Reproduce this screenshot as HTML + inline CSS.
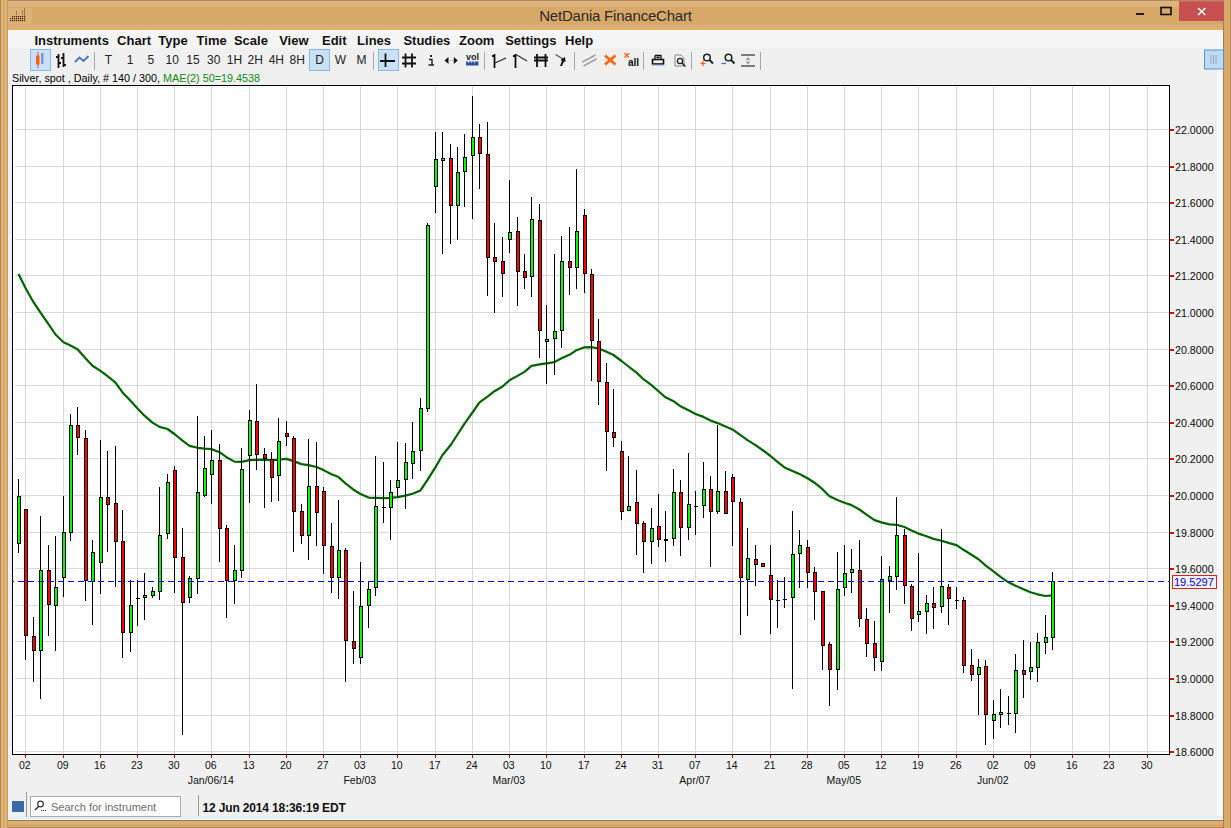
<!DOCTYPE html>
<html><head><meta charset="utf-8"><style>
*{margin:0;padding:0;box-sizing:border-box}
html,body{width:1231px;height:828px;overflow:hidden;background:#d8a868;font-family:"Liberation Sans", sans-serif}
.abs{position:absolute}
#titlebar{position:absolute;left:0;top:0;width:1231px;height:30px;background:linear-gradient(#b08a5a 0px,#b08a5a 1px,#dcb47e 1px,#dcb47e 7px,#d8a868 7px,#d8a868 24px,#e6a866 24px,#e6a866 25px,#d2b07a 25px,#d2b07a 28px,#e8b05e 28px,#e8b05e 30px)}
#title{position:absolute;left:0;width:1231px;top:6.5px;text-align:center;font-size:15px;color:#2a2a2a;letter-spacing:-0.2px}
#content{position:absolute;left:8px;top:30px;width:1215px;height:790px;background:#f0f0f0}
#menubar{position:absolute;left:8px;top:30px;width:1209px;height:18px;background:#f5f5f5}
.mi{position:absolute;top:33px;font-size:13px;font-weight:bold;color:#111;white-space:nowrap}
.tt{position:absolute;top:53px;width:30px;text-align:center;font-size:12px;color:#222}
.sep{position:absolute;top:52px;width:1px;height:18px;background:#a8a8a8}
.sel{position:absolute;top:49px;height:22px;background:#c9e0f7;border:1px solid #86b8ea}
#info{position:absolute;left:12px;top:72px;font-size:10.8px;color:#000;white-space:nowrap}
.yl{position:absolute;left:1175px;font-size:10.7px;color:#0a0a0a;white-space:nowrap;line-height:14px;transform:scaleY(1.08);transform-origin:0 50%}
.xl{position:absolute;top:758px;width:40px;text-align:center;font-size:10.5px;color:#111;line-height:14px;transform:scaleY(1.1)}
.ml{position:absolute;top:773px;width:80px;text-align:center;font-size:10.5px;color:#111;line-height:14px}
</style></head><body>
<div id="titlebar"></div>
<div class="abs" style="left:0;top:0;width:8px;height:828px;background:linear-gradient(90deg,#b08550 0,#b08550 1px,#dcb47c 1px,#dcb47c 3px,#d6aa62 3px,#d6aa62 5px,#dcb47c 5px,#dcb47c 7px,#c29a68 7px,#c29a68 8px)"></div>
<div class="abs" style="left:1223px;top:0;width:8px;height:828px;background:linear-gradient(90deg,#a87c4c 0,#a87c4c 1px,#d8a868 1px,#d8a868 6px,#dcb47c 6px,#dcb47c 7px,#b08550 7px)"></div>
<div class="abs" style="left:8px;top:820px;width:1215px;height:8px;background:linear-gradient(#a07848 0,#a07848 1px,#e8ac5c 1px,#e8ac5c 2.5px,#d4b47c 2.5px,#d4b47c 4px,#d8a868 4px,#d8a868 7px,#b08a58 7px)"></div>
<div id="title">NetDania FinanceChart</div>
<div id="content"></div>
<div class="abs" style="left:1217px;top:30px;width:6px;height:790px;background:#f4f7fb"></div>
<div class="abs" style="left:8px;top:816px;width:1215px;height:4px;background:linear-gradient(#e3eefa 0,#e3eefa 3px,#fff 3px)"></div>
<div id="menubar"></div>
<div class="mi" style="left:34.5px">Instruments</div>
<div class="mi" style="left:117.1px">Chart&nbsp;&nbsp;Type</div>
<div class="mi" style="left:196.6px">Time&nbsp;&nbsp;Scale</div>
<div class="mi" style="left:279.2px">View</div>
<div class="mi" style="left:322px">Edit</div>
<div class="mi" style="left:357.1px">Lines</div>
<div class="mi" style="left:403.4px">Studies</div>
<div class="mi" style="left:459px">Zoom</div>
<div class="mi" style="left:505.2px">Settings</div>
<div class="mi" style="left:565px">Help</div>
<div class="sel" style="left:30px;width:21px"></div>
<div class="sel" style="left:309px;width:21px"></div>
<div class="sel" style="left:378px;width:21px"></div>
<div class="tt" style="left:93.5px">T</div>
<div class="tt" style="left:115.1px">1</div>
<div class="tt" style="left:135.9px">5</div>
<div class="tt" style="left:157.2px">10</div>
<div class="tt" style="left:177.9px">15</div>
<div class="tt" style="left:198.7px">30</div>
<div class="tt" style="left:219.4px">1H</div>
<div class="tt" style="left:240.2px">2H</div>
<div class="tt" style="left:261.3px">4H</div>
<div class="tt" style="left:282.2px">8H</div>
<div class="tt" style="left:304.5px">D</div>
<div class="tt" style="left:325.3px">W</div>
<div class="tt" style="left:346.4px">M</div>
<div class="sep" style="left:94px"></div>
<div class="sep" style="left:373px"></div>
<div class="sep" style="left:484px"></div>
<div class="sep" style="left:574px"></div>
<div class="sep" style="left:643px"></div>
<div class="sep" style="left:691px"></div>
<div class="sep" style="left:760px"></div>
<div id="info">Silver, spot , Daily, # 140 / 300, <span style="color:#128a12">MAE(2) 50=19.4538</span></div>
<svg class="abs" style="left:0;top:0" width="1231" height="828" viewBox="0 0 1231 828" shape-rendering="crispEdges">
<rect x="12" y="85" width="1157" height="669" fill="#ffffff"/>
<line x1="15" y1="129.5" x2="1169" y2="129.5" stroke="#d9d9d9" stroke-width="1"/>
<line x1="15" y1="166.5" x2="1169" y2="166.5" stroke="#d9d9d9" stroke-width="1"/>
<line x1="15" y1="202.5" x2="1169" y2="202.5" stroke="#d9d9d9" stroke-width="1"/>
<line x1="15" y1="239.5" x2="1169" y2="239.5" stroke="#d9d9d9" stroke-width="1"/>
<line x1="15" y1="275.5" x2="1169" y2="275.5" stroke="#d9d9d9" stroke-width="1"/>
<line x1="15" y1="312.5" x2="1169" y2="312.5" stroke="#d9d9d9" stroke-width="1"/>
<line x1="15" y1="349.5" x2="1169" y2="349.5" stroke="#d9d9d9" stroke-width="1"/>
<line x1="15" y1="385.5" x2="1169" y2="385.5" stroke="#d9d9d9" stroke-width="1"/>
<line x1="15" y1="422.5" x2="1169" y2="422.5" stroke="#d9d9d9" stroke-width="1"/>
<line x1="15" y1="458.5" x2="1169" y2="458.5" stroke="#d9d9d9" stroke-width="1"/>
<line x1="15" y1="495.5" x2="1169" y2="495.5" stroke="#d9d9d9" stroke-width="1"/>
<line x1="15" y1="532.5" x2="1169" y2="532.5" stroke="#d9d9d9" stroke-width="1"/>
<line x1="15" y1="568.5" x2="1169" y2="568.5" stroke="#d9d9d9" stroke-width="1"/>
<line x1="15" y1="605.5" x2="1169" y2="605.5" stroke="#d9d9d9" stroke-width="1"/>
<line x1="15" y1="641.5" x2="1169" y2="641.5" stroke="#d9d9d9" stroke-width="1"/>
<line x1="15" y1="678.5" x2="1169" y2="678.5" stroke="#d9d9d9" stroke-width="1"/>
<line x1="15" y1="715.5" x2="1169" y2="715.5" stroke="#d9d9d9" stroke-width="1"/>
<line x1="15" y1="751.5" x2="1169" y2="751.5" stroke="#d9d9d9" stroke-width="1"/>
<line x1="25.5" y1="85" x2="25.5" y2="754" stroke="#d9d9d9" stroke-width="1"/>
<line x1="63.5" y1="85" x2="63.5" y2="754" stroke="#d9d9d9" stroke-width="1"/>
<line x1="100.5" y1="85" x2="100.5" y2="754" stroke="#d9d9d9" stroke-width="1"/>
<line x1="137.5" y1="85" x2="137.5" y2="754" stroke="#d9d9d9" stroke-width="1"/>
<line x1="174.5" y1="85" x2="174.5" y2="754" stroke="#d9d9d9" stroke-width="1"/>
<line x1="211.5" y1="85" x2="211.5" y2="754" stroke="#d9d9d9" stroke-width="1"/>
<line x1="249.5" y1="85" x2="249.5" y2="754" stroke="#d9d9d9" stroke-width="1"/>
<line x1="286.5" y1="85" x2="286.5" y2="754" stroke="#d9d9d9" stroke-width="1"/>
<line x1="323.5" y1="85" x2="323.5" y2="754" stroke="#d9d9d9" stroke-width="1"/>
<line x1="360.5" y1="85" x2="360.5" y2="754" stroke="#d9d9d9" stroke-width="1"/>
<line x1="397.5" y1="85" x2="397.5" y2="754" stroke="#d9d9d9" stroke-width="1"/>
<line x1="435.5" y1="85" x2="435.5" y2="754" stroke="#d9d9d9" stroke-width="1"/>
<line x1="472.5" y1="85" x2="472.5" y2="754" stroke="#d9d9d9" stroke-width="1"/>
<line x1="509.5" y1="85" x2="509.5" y2="754" stroke="#d9d9d9" stroke-width="1"/>
<line x1="546.5" y1="85" x2="546.5" y2="754" stroke="#d9d9d9" stroke-width="1"/>
<line x1="584.5" y1="85" x2="584.5" y2="754" stroke="#d9d9d9" stroke-width="1"/>
<line x1="621.5" y1="85" x2="621.5" y2="754" stroke="#d9d9d9" stroke-width="1"/>
<line x1="658.5" y1="85" x2="658.5" y2="754" stroke="#d9d9d9" stroke-width="1"/>
<line x1="695.5" y1="85" x2="695.5" y2="754" stroke="#d9d9d9" stroke-width="1"/>
<line x1="732.5" y1="85" x2="732.5" y2="754" stroke="#d9d9d9" stroke-width="1"/>
<line x1="770.5" y1="85" x2="770.5" y2="754" stroke="#d9d9d9" stroke-width="1"/>
<line x1="807.5" y1="85" x2="807.5" y2="754" stroke="#d9d9d9" stroke-width="1"/>
<line x1="844.5" y1="85" x2="844.5" y2="754" stroke="#d9d9d9" stroke-width="1"/>
<line x1="881.5" y1="85" x2="881.5" y2="754" stroke="#d9d9d9" stroke-width="1"/>
<line x1="918.5" y1="85" x2="918.5" y2="754" stroke="#d9d9d9" stroke-width="1"/>
<line x1="956.5" y1="85" x2="956.5" y2="754" stroke="#d9d9d9" stroke-width="1"/>
<line x1="993.5" y1="85" x2="993.5" y2="754" stroke="#d9d9d9" stroke-width="1"/>
<line x1="1030.5" y1="85" x2="1030.5" y2="754" stroke="#d9d9d9" stroke-width="1"/>
<line x1="1072.5" y1="85" x2="1072.5" y2="754" stroke="#d9d9d9" stroke-width="1"/>
<line x1="1109.5" y1="85" x2="1109.5" y2="754" stroke="#d9d9d9" stroke-width="1"/>
<line x1="1147.5" y1="85" x2="1147.5" y2="754" stroke="#d9d9d9" stroke-width="1"/>
<polyline points="18.5,273.9 25.5,288.0 33.5,302.2 40.5,312.7 48.5,324.2 55.5,334.5 63.5,342.3 70.5,345.5 77.5,349.2 85.5,358.3 92.5,365.8 100.5,370.9 107.5,376.1 115.5,382.6 122.5,392.4 130.5,400.7 137.5,408.4 144.5,415.7 152.5,422.6 159.5,426.9 167.5,429.0 174.5,434.0 182.5,440.6 189.5,445.9 197.5,447.8 204.5,448.6 211.5,449.1 219.5,452.2 226.5,457.2 234.5,461.6 241.5,461.9 249.5,460.1 256.5,459.8 264.5,459.7 271.5,460.4 278.5,459.7 286.5,458.9 293.5,461.1 301.5,464.1 308.5,465.1 316.5,467.0 323.5,470.1 331.5,474.3 338.5,477.1 345.5,483.4 353.5,489.7 360.5,494.0 368.5,497.6 375.5,497.8 383.5,498.1 390.5,497.8 397.5,497.1 405.5,495.6 412.5,493.8 420.5,490.4 427.5,479.9 435.5,467.2 442.5,455.0 450.5,445.3 457.5,434.5 464.5,423.7 472.5,412.5 479.5,402.3 487.5,396.6 494.5,391.2 502.5,386.5 509.5,380.3 517.5,375.9 524.5,371.9 531.5,365.8 539.5,364.4 546.5,363.3 554.5,362.1 561.5,358.2 569.5,354.8 576.5,350.2 584.5,347.3 591.5,347.2 598.5,348.5 606.5,351.8 613.5,355.0 621.5,361.0 628.5,366.5 636.5,372.6 643.5,379.2 651.5,385.1 658.5,391.3 665.5,397.3 673.5,401.2 680.5,406.3 688.5,410.3 695.5,414.0 703.5,416.9 710.5,420.5 717.5,423.1 725.5,426.5 732.5,429.4 740.5,435.2 747.5,440.1 755.5,445.1 762.5,450.0 770.5,456.0 777.5,461.8 784.5,467.4 792.5,471.0 799.5,474.1 807.5,478.2 814.5,482.7 822.5,489.2 829.5,496.3 837.5,499.9 844.5,502.7 851.5,505.1 859.5,509.5 866.5,514.6 874.5,520.1 881.5,522.4 889.5,524.4 896.5,524.8 904.5,527.0 911.5,530.6 918.5,533.6 926.5,536.2 933.5,538.9 941.5,540.7 948.5,542.9 956.5,545.1 963.5,549.8 971.5,554.7 978.5,559.2 985.5,565.4 993.5,571.3 1000.5,576.9 1008.5,582.3 1015.5,585.7 1023.5,589.2 1030.5,592.3 1037.5,594.3 1045.5,596.0 1052.5,595.4" fill="none" stroke="#006400" stroke-width="2.2" stroke-linejoin="round" shape-rendering="geometricPrecision"/>
<rect x="18" y="479" width="1" height="74" fill="#000"/>
<rect x="17" y="496" width="4" height="48" fill="#000"/>
<rect x="18" y="497" width="2" height="46" fill="#00ff00"/>
<rect x="25" y="509" width="1" height="151" fill="#000"/>
<rect x="24" y="509" width="4" height="127" fill="#000"/>
<rect x="25" y="510" width="2" height="125" fill="#ff0000"/>
<rect x="33" y="617" width="1" height="65" fill="#000"/>
<rect x="32" y="636" width="4" height="15" fill="#000"/>
<rect x="33" y="637" width="2" height="13" fill="#ff0000"/>
<rect x="40" y="516" width="1" height="183" fill="#000"/>
<rect x="39" y="570" width="4" height="81" fill="#000"/>
<rect x="40" y="571" width="2" height="79" fill="#00ff00"/>
<rect x="48" y="545" width="1" height="91" fill="#000"/>
<rect x="47" y="570" width="4" height="35" fill="#000"/>
<rect x="48" y="571" width="2" height="33" fill="#ff0000"/>
<rect x="55" y="536" width="1" height="115" fill="#000"/>
<rect x="54" y="587" width="4" height="19" fill="#000"/>
<rect x="55" y="588" width="2" height="17" fill="#00ff00"/>
<rect x="63" y="496" width="1" height="101" fill="#000"/>
<rect x="62" y="532" width="4" height="46" fill="#000"/>
<rect x="63" y="533" width="2" height="44" fill="#00ff00"/>
<rect x="70" y="414" width="1" height="127" fill="#000"/>
<rect x="69" y="425" width="4" height="108" fill="#000"/>
<rect x="70" y="426" width="2" height="106" fill="#00ff00"/>
<rect x="77" y="407" width="1" height="48" fill="#000"/>
<rect x="76" y="425" width="4" height="13" fill="#000"/>
<rect x="77" y="426" width="2" height="11" fill="#ff0000"/>
<rect x="85" y="430" width="1" height="171" fill="#000"/>
<rect x="84" y="438" width="4" height="143" fill="#000"/>
<rect x="85" y="439" width="2" height="141" fill="#ff0000"/>
<rect x="92" y="540" width="1" height="85" fill="#000"/>
<rect x="91" y="552" width="4" height="30" fill="#000"/>
<rect x="92" y="553" width="2" height="28" fill="#00ff00"/>
<rect x="100" y="440" width="1" height="154" fill="#000"/>
<rect x="99" y="497" width="4" height="66" fill="#000"/>
<rect x="100" y="498" width="2" height="64" fill="#00ff00"/>
<rect x="107" y="451" width="1" height="101" fill="#000"/>
<rect x="106" y="497" width="4" height="8" fill="#000"/>
<rect x="107" y="498" width="2" height="6" fill="#ff0000"/>
<rect x="115" y="446" width="1" height="141" fill="#000"/>
<rect x="114" y="503" width="4" height="39" fill="#000"/>
<rect x="115" y="504" width="2" height="37" fill="#ff0000"/>
<rect x="122" y="510" width="1" height="148" fill="#000"/>
<rect x="121" y="541" width="4" height="92" fill="#000"/>
<rect x="122" y="542" width="2" height="90" fill="#ff0000"/>
<rect x="130" y="580" width="1" height="72" fill="#000"/>
<rect x="129" y="605" width="4" height="28" fill="#000"/>
<rect x="130" y="606" width="2" height="26" fill="#00ff00"/>
<rect x="137" y="580" width="1" height="46" fill="#000"/>
<rect x="136" y="598" width="4" height="1" fill="#000"/>
<rect x="144" y="573" width="1" height="47" fill="#000"/>
<rect x="143" y="595" width="4" height="3" fill="#000"/>
<rect x="144" y="596" width="2" height="1" fill="#00ff00"/>
<rect x="152" y="587" width="1" height="11" fill="#000"/>
<rect x="151" y="591" width="4" height="5" fill="#000"/>
<rect x="152" y="592" width="2" height="3" fill="#00ff00"/>
<rect x="159" y="487" width="1" height="113" fill="#000"/>
<rect x="158" y="535" width="4" height="57" fill="#000"/>
<rect x="159" y="536" width="2" height="55" fill="#00ff00"/>
<rect x="167" y="474" width="1" height="65" fill="#000"/>
<rect x="166" y="482" width="4" height="52" fill="#000"/>
<rect x="167" y="483" width="2" height="50" fill="#00ff00"/>
<rect x="174" y="466" width="1" height="127" fill="#000"/>
<rect x="173" y="470" width="4" height="88" fill="#000"/>
<rect x="174" y="471" width="2" height="86" fill="#ff0000"/>
<rect x="182" y="528" width="1" height="207" fill="#000"/>
<rect x="181" y="557" width="4" height="46" fill="#000"/>
<rect x="182" y="558" width="2" height="44" fill="#ff0000"/>
<rect x="189" y="576" width="1" height="27" fill="#000"/>
<rect x="188" y="578" width="4" height="20" fill="#000"/>
<rect x="189" y="579" width="2" height="18" fill="#00ff00"/>
<rect x="197" y="416" width="1" height="178" fill="#000"/>
<rect x="196" y="492" width="4" height="87" fill="#000"/>
<rect x="197" y="493" width="2" height="85" fill="#00ff00"/>
<rect x="204" y="436" width="1" height="61" fill="#000"/>
<rect x="203" y="468" width="4" height="28" fill="#000"/>
<rect x="204" y="469" width="2" height="26" fill="#00ff00"/>
<rect x="211" y="430" width="1" height="74" fill="#000"/>
<rect x="210" y="460" width="4" height="15" fill="#000"/>
<rect x="211" y="461" width="2" height="13" fill="#00ff00"/>
<rect x="219" y="444" width="1" height="118" fill="#000"/>
<rect x="218" y="460" width="4" height="69" fill="#000"/>
<rect x="219" y="461" width="2" height="67" fill="#ff0000"/>
<rect x="226" y="525" width="1" height="93" fill="#000"/>
<rect x="225" y="528" width="4" height="53" fill="#000"/>
<rect x="226" y="529" width="2" height="51" fill="#ff0000"/>
<rect x="234" y="545" width="1" height="59" fill="#000"/>
<rect x="233" y="570" width="4" height="11" fill="#000"/>
<rect x="234" y="571" width="2" height="9" fill="#00ff00"/>
<rect x="241" y="448" width="1" height="130" fill="#000"/>
<rect x="240" y="469" width="4" height="102" fill="#000"/>
<rect x="241" y="470" width="2" height="100" fill="#00ff00"/>
<rect x="249" y="410" width="1" height="93" fill="#000"/>
<rect x="248" y="420" width="4" height="36" fill="#000"/>
<rect x="249" y="421" width="2" height="34" fill="#00ff00"/>
<rect x="256" y="384" width="1" height="86" fill="#000"/>
<rect x="255" y="421" width="4" height="34" fill="#000"/>
<rect x="256" y="422" width="2" height="32" fill="#ff0000"/>
<rect x="264" y="448" width="1" height="60" fill="#000"/>
<rect x="263" y="454" width="4" height="5" fill="#000"/>
<rect x="264" y="455" width="2" height="3" fill="#ff0000"/>
<rect x="271" y="452" width="1" height="50" fill="#000"/>
<rect x="270" y="459" width="4" height="19" fill="#000"/>
<rect x="271" y="460" width="2" height="17" fill="#ff0000"/>
<rect x="278" y="418" width="1" height="83" fill="#000"/>
<rect x="277" y="441" width="4" height="35" fill="#000"/>
<rect x="278" y="442" width="2" height="33" fill="#00ff00"/>
<rect x="286" y="421" width="1" height="25" fill="#000"/>
<rect x="285" y="433" width="4" height="4" fill="#000"/>
<rect x="286" y="434" width="2" height="2" fill="#ff0000"/>
<rect x="293" y="436" width="1" height="116" fill="#000"/>
<rect x="292" y="438" width="4" height="74" fill="#000"/>
<rect x="293" y="439" width="2" height="72" fill="#ff0000"/>
<rect x="301" y="504" width="1" height="40" fill="#000"/>
<rect x="300" y="511" width="4" height="25" fill="#000"/>
<rect x="301" y="512" width="2" height="23" fill="#ff0000"/>
<rect x="308" y="439" width="1" height="121" fill="#000"/>
<rect x="307" y="486" width="4" height="50" fill="#000"/>
<rect x="308" y="487" width="2" height="48" fill="#00ff00"/>
<rect x="316" y="442" width="1" height="104" fill="#000"/>
<rect x="315" y="486" width="4" height="27" fill="#000"/>
<rect x="316" y="487" width="2" height="25" fill="#ff0000"/>
<rect x="323" y="487" width="1" height="87" fill="#000"/>
<rect x="322" y="491" width="4" height="55" fill="#000"/>
<rect x="323" y="492" width="2" height="53" fill="#ff0000"/>
<rect x="331" y="523" width="1" height="70" fill="#000"/>
<rect x="330" y="546" width="4" height="32" fill="#000"/>
<rect x="331" y="547" width="2" height="30" fill="#ff0000"/>
<rect x="338" y="500" width="1" height="99" fill="#000"/>
<rect x="337" y="550" width="4" height="28" fill="#000"/>
<rect x="338" y="551" width="2" height="26" fill="#00ff00"/>
<rect x="345" y="548" width="1" height="134" fill="#000"/>
<rect x="344" y="550" width="4" height="91" fill="#000"/>
<rect x="345" y="551" width="2" height="89" fill="#ff0000"/>
<rect x="353" y="591" width="1" height="73" fill="#000"/>
<rect x="352" y="641" width="4" height="8" fill="#000"/>
<rect x="353" y="642" width="2" height="6" fill="#ff0000"/>
<rect x="360" y="562" width="1" height="102" fill="#000"/>
<rect x="359" y="606" width="4" height="52" fill="#000"/>
<rect x="360" y="607" width="2" height="50" fill="#00ff00"/>
<rect x="368" y="581" width="1" height="47" fill="#000"/>
<rect x="367" y="589" width="4" height="17" fill="#000"/>
<rect x="368" y="590" width="2" height="15" fill="#00ff00"/>
<rect x="375" y="456" width="1" height="140" fill="#000"/>
<rect x="374" y="506" width="4" height="82" fill="#000"/>
<rect x="375" y="507" width="2" height="80" fill="#00ff00"/>
<rect x="383" y="462" width="1" height="61" fill="#000"/>
<rect x="382" y="507" width="4" height="1" fill="#000"/>
<rect x="390" y="480" width="1" height="60" fill="#000"/>
<rect x="389" y="492" width="4" height="16" fill="#000"/>
<rect x="390" y="493" width="2" height="14" fill="#00ff00"/>
<rect x="397" y="442" width="1" height="55" fill="#000"/>
<rect x="396" y="480" width="4" height="8" fill="#000"/>
<rect x="397" y="481" width="2" height="6" fill="#00ff00"/>
<rect x="405" y="443" width="1" height="66" fill="#000"/>
<rect x="404" y="462" width="4" height="18" fill="#000"/>
<rect x="405" y="463" width="2" height="16" fill="#00ff00"/>
<rect x="412" y="422" width="1" height="57" fill="#000"/>
<rect x="411" y="451" width="4" height="13" fill="#000"/>
<rect x="412" y="452" width="2" height="11" fill="#00ff00"/>
<rect x="420" y="398" width="1" height="73" fill="#000"/>
<rect x="419" y="408" width="4" height="43" fill="#000"/>
<rect x="420" y="409" width="2" height="41" fill="#00ff00"/>
<rect x="427" y="223" width="1" height="189" fill="#000"/>
<rect x="426" y="225" width="4" height="184" fill="#000"/>
<rect x="427" y="226" width="2" height="182" fill="#00ff00"/>
<rect x="435" y="132" width="1" height="81" fill="#000"/>
<rect x="434" y="159" width="4" height="28" fill="#000"/>
<rect x="435" y="160" width="2" height="26" fill="#00ff00"/>
<rect x="442" y="132" width="1" height="122" fill="#000"/>
<rect x="441" y="158" width="4" height="3" fill="#000"/>
<rect x="442" y="159" width="2" height="1" fill="#00ff00"/>
<rect x="450" y="144" width="1" height="100" fill="#000"/>
<rect x="449" y="158" width="4" height="48" fill="#000"/>
<rect x="450" y="159" width="2" height="46" fill="#ff0000"/>
<rect x="457" y="147" width="1" height="93" fill="#000"/>
<rect x="456" y="172" width="4" height="34" fill="#000"/>
<rect x="457" y="173" width="2" height="32" fill="#00ff00"/>
<rect x="464" y="134" width="1" height="73" fill="#000"/>
<rect x="463" y="157" width="4" height="15" fill="#000"/>
<rect x="464" y="158" width="2" height="13" fill="#00ff00"/>
<rect x="472" y="96" width="1" height="123" fill="#000"/>
<rect x="471" y="137" width="4" height="19" fill="#000"/>
<rect x="472" y="138" width="2" height="17" fill="#00ff00"/>
<rect x="479" y="124" width="1" height="65" fill="#000"/>
<rect x="478" y="137" width="4" height="17" fill="#000"/>
<rect x="479" y="138" width="2" height="15" fill="#ff0000"/>
<rect x="487" y="122" width="1" height="174" fill="#000"/>
<rect x="486" y="154" width="4" height="104" fill="#000"/>
<rect x="487" y="155" width="2" height="102" fill="#ff0000"/>
<rect x="494" y="223" width="1" height="90" fill="#000"/>
<rect x="493" y="257" width="4" height="5" fill="#000"/>
<rect x="494" y="258" width="2" height="3" fill="#ff0000"/>
<rect x="502" y="237" width="1" height="60" fill="#000"/>
<rect x="501" y="261" width="4" height="13" fill="#000"/>
<rect x="502" y="262" width="2" height="11" fill="#ff0000"/>
<rect x="509" y="180" width="1" height="73" fill="#000"/>
<rect x="508" y="232" width="4" height="8" fill="#000"/>
<rect x="509" y="233" width="2" height="6" fill="#00ff00"/>
<rect x="517" y="217" width="1" height="89" fill="#000"/>
<rect x="516" y="231" width="4" height="41" fill="#000"/>
<rect x="517" y="232" width="2" height="39" fill="#ff0000"/>
<rect x="524" y="254" width="1" height="35" fill="#000"/>
<rect x="523" y="271" width="4" height="7" fill="#000"/>
<rect x="524" y="272" width="2" height="5" fill="#ff0000"/>
<rect x="531" y="197" width="1" height="100" fill="#000"/>
<rect x="530" y="219" width="4" height="58" fill="#000"/>
<rect x="531" y="220" width="2" height="56" fill="#00ff00"/>
<rect x="539" y="204" width="1" height="154" fill="#000"/>
<rect x="538" y="220" width="4" height="111" fill="#000"/>
<rect x="539" y="221" width="2" height="109" fill="#ff0000"/>
<rect x="546" y="305" width="1" height="79" fill="#000"/>
<rect x="545" y="339" width="4" height="3" fill="#000"/>
<rect x="546" y="340" width="2" height="1" fill="#00ff00"/>
<rect x="554" y="254" width="1" height="121" fill="#000"/>
<rect x="553" y="331" width="4" height="8" fill="#000"/>
<rect x="554" y="332" width="2" height="6" fill="#00ff00"/>
<rect x="561" y="236" width="1" height="112" fill="#000"/>
<rect x="560" y="261" width="4" height="70" fill="#000"/>
<rect x="561" y="262" width="2" height="68" fill="#00ff00"/>
<rect x="569" y="227" width="1" height="68" fill="#000"/>
<rect x="568" y="261" width="4" height="7" fill="#000"/>
<rect x="569" y="262" width="2" height="5" fill="#ff0000"/>
<rect x="576" y="169" width="1" height="120" fill="#000"/>
<rect x="575" y="231" width="4" height="37" fill="#000"/>
<rect x="576" y="232" width="2" height="35" fill="#00ff00"/>
<rect x="584" y="209" width="1" height="84" fill="#000"/>
<rect x="583" y="215" width="4" height="59" fill="#000"/>
<rect x="584" y="216" width="2" height="57" fill="#ff0000"/>
<rect x="591" y="269" width="1" height="112" fill="#000"/>
<rect x="590" y="274" width="4" height="67" fill="#000"/>
<rect x="591" y="275" width="2" height="65" fill="#ff0000"/>
<rect x="598" y="319" width="1" height="86" fill="#000"/>
<rect x="597" y="341" width="4" height="41" fill="#000"/>
<rect x="598" y="342" width="2" height="39" fill="#ff0000"/>
<rect x="606" y="363" width="1" height="108" fill="#000"/>
<rect x="605" y="382" width="4" height="50" fill="#000"/>
<rect x="606" y="383" width="2" height="48" fill="#ff0000"/>
<rect x="613" y="389" width="1" height="58" fill="#000"/>
<rect x="612" y="432" width="4" height="6" fill="#000"/>
<rect x="613" y="433" width="2" height="4" fill="#ff0000"/>
<rect x="621" y="441" width="1" height="79" fill="#000"/>
<rect x="620" y="451" width="4" height="61" fill="#000"/>
<rect x="621" y="452" width="2" height="59" fill="#ff0000"/>
<rect x="628" y="456" width="1" height="55" fill="#000"/>
<rect x="627" y="506" width="4" height="5" fill="#000"/>
<rect x="628" y="507" width="2" height="3" fill="#00ff00"/>
<rect x="636" y="470" width="1" height="85" fill="#000"/>
<rect x="635" y="502" width="4" height="22" fill="#000"/>
<rect x="636" y="503" width="2" height="20" fill="#ff0000"/>
<rect x="643" y="521" width="1" height="52" fill="#000"/>
<rect x="642" y="523" width="4" height="19" fill="#000"/>
<rect x="643" y="524" width="2" height="17" fill="#ff0000"/>
<rect x="651" y="508" width="1" height="56" fill="#000"/>
<rect x="650" y="528" width="4" height="14" fill="#000"/>
<rect x="651" y="529" width="2" height="12" fill="#00ff00"/>
<rect x="658" y="494" width="1" height="53" fill="#000"/>
<rect x="657" y="526" width="4" height="14" fill="#000"/>
<rect x="658" y="527" width="2" height="12" fill="#ff0000"/>
<rect x="665" y="511" width="1" height="51" fill="#000"/>
<rect x="664" y="539" width="4" height="2" fill="#000"/>
<rect x="673" y="469" width="1" height="77" fill="#000"/>
<rect x="672" y="492" width="4" height="47" fill="#000"/>
<rect x="673" y="493" width="2" height="45" fill="#00ff00"/>
<rect x="680" y="480" width="1" height="76" fill="#000"/>
<rect x="679" y="492" width="4" height="36" fill="#000"/>
<rect x="680" y="493" width="2" height="34" fill="#ff0000"/>
<rect x="688" y="453" width="1" height="87" fill="#000"/>
<rect x="687" y="504" width="4" height="24" fill="#000"/>
<rect x="688" y="505" width="2" height="22" fill="#00ff00"/>
<rect x="695" y="491" width="1" height="44" fill="#000"/>
<rect x="694" y="506" width="4" height="1" fill="#000"/>
<rect x="703" y="462" width="1" height="56" fill="#000"/>
<rect x="702" y="489" width="4" height="17" fill="#000"/>
<rect x="703" y="490" width="2" height="15" fill="#00ff00"/>
<rect x="710" y="476" width="1" height="91" fill="#000"/>
<rect x="709" y="489" width="4" height="23" fill="#000"/>
<rect x="710" y="490" width="2" height="21" fill="#ff0000"/>
<rect x="717" y="425" width="1" height="89" fill="#000"/>
<rect x="716" y="491" width="4" height="21" fill="#000"/>
<rect x="717" y="492" width="2" height="19" fill="#00ff00"/>
<rect x="725" y="471" width="1" height="43" fill="#000"/>
<rect x="724" y="491" width="4" height="23" fill="#000"/>
<rect x="725" y="492" width="2" height="21" fill="#ff0000"/>
<rect x="732" y="474" width="1" height="72" fill="#000"/>
<rect x="731" y="477" width="4" height="25" fill="#000"/>
<rect x="732" y="478" width="2" height="23" fill="#ff0000"/>
<rect x="740" y="498" width="1" height="137" fill="#000"/>
<rect x="739" y="502" width="4" height="76" fill="#000"/>
<rect x="740" y="503" width="2" height="74" fill="#ff0000"/>
<rect x="747" y="528" width="1" height="88" fill="#000"/>
<rect x="746" y="558" width="4" height="22" fill="#000"/>
<rect x="747" y="559" width="2" height="20" fill="#00ff00"/>
<rect x="755" y="545" width="1" height="41" fill="#000"/>
<rect x="754" y="559" width="4" height="6" fill="#000"/>
<rect x="755" y="560" width="2" height="4" fill="#ff0000"/>
<rect x="762" y="563" width="1" height="4" fill="#000"/>
<rect x="761" y="563" width="4" height="4" fill="#000"/>
<rect x="762" y="564" width="2" height="2" fill="#ff0000"/>
<rect x="770" y="545" width="1" height="89" fill="#000"/>
<rect x="769" y="575" width="4" height="25" fill="#000"/>
<rect x="770" y="576" width="2" height="23" fill="#ff0000"/>
<rect x="777" y="580" width="1" height="48" fill="#000"/>
<rect x="776" y="600" width="4" height="1" fill="#000"/>
<rect x="784" y="577" width="1" height="31" fill="#000"/>
<rect x="783" y="599" width="4" height="1" fill="#000"/>
<rect x="792" y="511" width="1" height="178" fill="#000"/>
<rect x="791" y="554" width="4" height="44" fill="#000"/>
<rect x="792" y="555" width="2" height="42" fill="#00ff00"/>
<rect x="799" y="530" width="1" height="58" fill="#000"/>
<rect x="798" y="545" width="4" height="9" fill="#000"/>
<rect x="799" y="546" width="2" height="7" fill="#00ff00"/>
<rect x="807" y="540" width="1" height="48" fill="#000"/>
<rect x="806" y="547" width="4" height="26" fill="#000"/>
<rect x="807" y="548" width="2" height="24" fill="#ff0000"/>
<rect x="814" y="567" width="1" height="53" fill="#000"/>
<rect x="813" y="572" width="4" height="20" fill="#000"/>
<rect x="814" y="573" width="2" height="18" fill="#ff0000"/>
<rect x="822" y="591" width="1" height="79" fill="#000"/>
<rect x="821" y="591" width="4" height="55" fill="#000"/>
<rect x="822" y="592" width="2" height="53" fill="#ff0000"/>
<rect x="829" y="642" width="1" height="64" fill="#000"/>
<rect x="828" y="644" width="4" height="26" fill="#000"/>
<rect x="829" y="645" width="2" height="24" fill="#ff0000"/>
<rect x="837" y="552" width="1" height="138" fill="#000"/>
<rect x="836" y="589" width="4" height="81" fill="#000"/>
<rect x="837" y="590" width="2" height="79" fill="#00ff00"/>
<rect x="844" y="545" width="1" height="51" fill="#000"/>
<rect x="843" y="573" width="4" height="15" fill="#000"/>
<rect x="844" y="574" width="2" height="13" fill="#00ff00"/>
<rect x="851" y="549" width="1" height="44" fill="#000"/>
<rect x="850" y="569" width="4" height="4" fill="#000"/>
<rect x="851" y="570" width="2" height="2" fill="#00ff00"/>
<rect x="859" y="540" width="1" height="87" fill="#000"/>
<rect x="858" y="570" width="4" height="49" fill="#000"/>
<rect x="859" y="571" width="2" height="47" fill="#ff0000"/>
<rect x="866" y="608" width="1" height="49" fill="#000"/>
<rect x="865" y="619" width="4" height="25" fill="#000"/>
<rect x="866" y="620" width="2" height="23" fill="#ff0000"/>
<rect x="874" y="621" width="1" height="50" fill="#000"/>
<rect x="873" y="643" width="4" height="15" fill="#000"/>
<rect x="874" y="644" width="2" height="13" fill="#ff0000"/>
<rect x="881" y="556" width="1" height="115" fill="#000"/>
<rect x="880" y="579" width="4" height="83" fill="#000"/>
<rect x="881" y="580" width="2" height="81" fill="#00ff00"/>
<rect x="889" y="566" width="1" height="47" fill="#000"/>
<rect x="888" y="576" width="4" height="5" fill="#000"/>
<rect x="889" y="577" width="2" height="3" fill="#00ff00"/>
<rect x="896" y="497" width="1" height="93" fill="#000"/>
<rect x="895" y="535" width="4" height="42" fill="#000"/>
<rect x="896" y="536" width="2" height="40" fill="#00ff00"/>
<rect x="904" y="529" width="1" height="75" fill="#000"/>
<rect x="903" y="535" width="4" height="51" fill="#000"/>
<rect x="904" y="536" width="2" height="49" fill="#ff0000"/>
<rect x="911" y="584" width="1" height="47" fill="#000"/>
<rect x="910" y="586" width="4" height="33" fill="#000"/>
<rect x="911" y="587" width="2" height="31" fill="#ff0000"/>
<rect x="918" y="553" width="1" height="69" fill="#000"/>
<rect x="917" y="611" width="4" height="4" fill="#000"/>
<rect x="918" y="612" width="2" height="2" fill="#00ff00"/>
<rect x="926" y="595" width="1" height="39" fill="#000"/>
<rect x="925" y="603" width="4" height="9" fill="#000"/>
<rect x="926" y="604" width="2" height="7" fill="#00ff00"/>
<rect x="933" y="587" width="1" height="42" fill="#000"/>
<rect x="932" y="603" width="4" height="5" fill="#000"/>
<rect x="933" y="604" width="2" height="3" fill="#ff0000"/>
<rect x="941" y="529" width="1" height="84" fill="#000"/>
<rect x="940" y="586" width="4" height="21" fill="#000"/>
<rect x="941" y="587" width="2" height="19" fill="#00ff00"/>
<rect x="948" y="584" width="1" height="41" fill="#000"/>
<rect x="947" y="587" width="4" height="12" fill="#000"/>
<rect x="948" y="588" width="2" height="10" fill="#ff0000"/>
<rect x="956" y="587" width="1" height="22" fill="#000"/>
<rect x="955" y="600" width="4" height="1" fill="#000"/>
<rect x="963" y="597" width="1" height="76" fill="#000"/>
<rect x="962" y="600" width="4" height="66" fill="#000"/>
<rect x="963" y="601" width="2" height="64" fill="#ff0000"/>
<rect x="971" y="649" width="1" height="32" fill="#000"/>
<rect x="970" y="665" width="4" height="10" fill="#000"/>
<rect x="971" y="666" width="2" height="8" fill="#ff0000"/>
<rect x="978" y="659" width="1" height="56" fill="#000"/>
<rect x="977" y="667" width="4" height="8" fill="#000"/>
<rect x="978" y="668" width="2" height="6" fill="#00ff00"/>
<rect x="985" y="660" width="1" height="85" fill="#000"/>
<rect x="984" y="666" width="4" height="49" fill="#000"/>
<rect x="985" y="667" width="2" height="47" fill="#ff0000"/>
<rect x="993" y="700" width="1" height="39" fill="#000"/>
<rect x="992" y="714" width="4" height="7" fill="#000"/>
<rect x="993" y="715" width="2" height="5" fill="#00ff00"/>
<rect x="1000" y="689" width="1" height="39" fill="#000"/>
<rect x="999" y="712" width="4" height="3" fill="#000"/>
<rect x="1000" y="713" width="2" height="1" fill="#00ff00"/>
<rect x="1008" y="696" width="1" height="29" fill="#000"/>
<rect x="1007" y="713" width="4" height="1" fill="#000"/>
<rect x="1015" y="654" width="1" height="79" fill="#000"/>
<rect x="1014" y="670" width="4" height="44" fill="#000"/>
<rect x="1015" y="671" width="2" height="42" fill="#00ff00"/>
<rect x="1023" y="640" width="1" height="58" fill="#000"/>
<rect x="1022" y="670" width="4" height="5" fill="#000"/>
<rect x="1023" y="671" width="2" height="3" fill="#ff0000"/>
<rect x="1030" y="642" width="1" height="38" fill="#000"/>
<rect x="1029" y="667" width="4" height="5" fill="#000"/>
<rect x="1030" y="668" width="2" height="3" fill="#00ff00"/>
<rect x="1037" y="633" width="1" height="49" fill="#000"/>
<rect x="1036" y="642" width="4" height="26" fill="#000"/>
<rect x="1037" y="643" width="2" height="24" fill="#00ff00"/>
<rect x="1045" y="615" width="1" height="39" fill="#000"/>
<rect x="1044" y="637" width="4" height="6" fill="#000"/>
<rect x="1045" y="638" width="2" height="4" fill="#00ff00"/>
<rect x="1052" y="572" width="1" height="78" fill="#000"/>
<rect x="1051" y="581" width="4" height="57" fill="#000"/>
<rect x="1052" y="582" width="2" height="55" fill="#00ff00"/>
<line x1="12" y1="581.5" x2="1169" y2="581.5" stroke="#0000ff" stroke-width="1" stroke-dasharray="6,4" stroke-dashoffset="4"/>
<rect x="12.5" y="85.5" width="1157" height="669" fill="none" stroke="#000" stroke-width="1"/>
<rect x="1170" y="129" width="4" height="2" fill="#e00000"/>
<rect x="1170" y="166" width="4" height="2" fill="#e00000"/>
<rect x="1170" y="202" width="4" height="2" fill="#e00000"/>
<rect x="1170" y="239" width="4" height="2" fill="#e00000"/>
<rect x="1170" y="275" width="4" height="2" fill="#e00000"/>
<rect x="1170" y="312" width="4" height="2" fill="#e00000"/>
<rect x="1170" y="349" width="4" height="2" fill="#e00000"/>
<rect x="1170" y="385" width="4" height="2" fill="#e00000"/>
<rect x="1170" y="422" width="4" height="2" fill="#e00000"/>
<rect x="1170" y="458" width="4" height="2" fill="#e00000"/>
<rect x="1170" y="495" width="4" height="2" fill="#e00000"/>
<rect x="1170" y="532" width="4" height="2" fill="#e00000"/>
<rect x="1170" y="568" width="4" height="2" fill="#e00000"/>
<rect x="1170" y="605" width="4" height="2" fill="#e00000"/>
<rect x="1170" y="641" width="4" height="2" fill="#e00000"/>
<rect x="1170" y="678" width="4" height="2" fill="#e00000"/>
<rect x="1170" y="715" width="4" height="2" fill="#e00000"/>
<rect x="1170" y="751" width="4" height="2" fill="#e00000"/>
<rect x="25" y="755" width="1" height="3" fill="#e00000"/>
<rect x="63" y="755" width="1" height="3" fill="#e00000"/>
<rect x="100" y="755" width="1" height="3" fill="#e00000"/>
<rect x="137" y="755" width="1" height="3" fill="#e00000"/>
<rect x="174" y="755" width="1" height="3" fill="#e00000"/>
<rect x="211" y="755" width="1" height="3" fill="#e00000"/>
<rect x="249" y="755" width="1" height="3" fill="#e00000"/>
<rect x="286" y="755" width="1" height="3" fill="#e00000"/>
<rect x="323" y="755" width="1" height="3" fill="#e00000"/>
<rect x="360" y="755" width="1" height="3" fill="#e00000"/>
<rect x="397" y="755" width="1" height="3" fill="#e00000"/>
<rect x="435" y="755" width="1" height="3" fill="#e00000"/>
<rect x="472" y="755" width="1" height="3" fill="#e00000"/>
<rect x="509" y="755" width="1" height="3" fill="#e00000"/>
<rect x="546" y="755" width="1" height="3" fill="#e00000"/>
<rect x="584" y="755" width="1" height="3" fill="#e00000"/>
<rect x="621" y="755" width="1" height="3" fill="#e00000"/>
<rect x="658" y="755" width="1" height="3" fill="#e00000"/>
<rect x="695" y="755" width="1" height="3" fill="#e00000"/>
<rect x="732" y="755" width="1" height="3" fill="#e00000"/>
<rect x="770" y="755" width="1" height="3" fill="#e00000"/>
<rect x="807" y="755" width="1" height="3" fill="#e00000"/>
<rect x="844" y="755" width="1" height="3" fill="#e00000"/>
<rect x="881" y="755" width="1" height="3" fill="#e00000"/>
<rect x="918" y="755" width="1" height="3" fill="#e00000"/>
<rect x="956" y="755" width="1" height="3" fill="#e00000"/>
<rect x="993" y="755" width="1" height="3" fill="#e00000"/>
<rect x="1030" y="755" width="1" height="3" fill="#e00000"/>
<rect x="1072" y="755" width="1" height="3" fill="#e00000"/>
<rect x="1109" y="755" width="1" height="3" fill="#e00000"/>
<rect x="1147" y="755" width="1" height="3" fill="#e00000"/>
</svg>
<div class="yl" style="top:123.2px">22.0000</div>
<div class="yl" style="top:160.2px">21.8000</div>
<div class="yl" style="top:196.2px">21.6000</div>
<div class="yl" style="top:233.2px">21.4000</div>
<div class="yl" style="top:269.2px">21.2000</div>
<div class="yl" style="top:306.2px">21.0000</div>
<div class="yl" style="top:343.2px">20.8000</div>
<div class="yl" style="top:379.2px">20.6000</div>
<div class="yl" style="top:416.2px">20.4000</div>
<div class="yl" style="top:452.2px">20.2000</div>
<div class="yl" style="top:489.2px">20.0000</div>
<div class="yl" style="top:526.2px">19.8000</div>
<div class="yl" style="top:562.2px">19.6000</div>
<div class="yl" style="top:599.2px">19.4000</div>
<div class="yl" style="top:635.2px">19.2000</div>
<div class="yl" style="top:672.2px">19.0000</div>
<div class="yl" style="top:709.2px">18.8000</div>
<div class="yl" style="top:745.2px">18.6000</div>
<div class="xl" style="left:4.8px">02</div>
<div class="xl" style="left:42.8px">09</div>
<div class="xl" style="left:79.8px">16</div>
<div class="xl" style="left:116.8px">23</div>
<div class="xl" style="left:153.8px">30</div>
<div class="xl" style="left:190.8px">06</div>
<div class="ml" style="left:170.8px">Jan/06/14</div>
<div class="xl" style="left:228.8px">13</div>
<div class="xl" style="left:265.8px">20</div>
<div class="xl" style="left:302.8px">27</div>
<div class="xl" style="left:339.8px">03</div>
<div class="ml" style="left:319.8px">Feb/03</div>
<div class="xl" style="left:376.8px">10</div>
<div class="xl" style="left:414.8px">17</div>
<div class="xl" style="left:451.8px">24</div>
<div class="xl" style="left:488.8px">03</div>
<div class="ml" style="left:468.8px">Mar/03</div>
<div class="xl" style="left:525.8px">10</div>
<div class="xl" style="left:563.8px">17</div>
<div class="xl" style="left:600.8px">24</div>
<div class="xl" style="left:637.8px">31</div>
<div class="xl" style="left:674.8px">07</div>
<div class="ml" style="left:654.8px">Apr/07</div>
<div class="xl" style="left:711.8px">14</div>
<div class="xl" style="left:749.8px">21</div>
<div class="xl" style="left:786.8px">28</div>
<div class="xl" style="left:823.8px">05</div>
<div class="ml" style="left:803.8px">May/05</div>
<div class="xl" style="left:860.8px">12</div>
<div class="xl" style="left:897.8px">19</div>
<div class="xl" style="left:935.8px">26</div>
<div class="xl" style="left:972.8px">02</div>
<div class="ml" style="left:952.8px">Jun/02</div>
<div class="xl" style="left:1009.8px">09</div>
<div class="xl" style="left:1051.8px">16</div>
<div class="xl" style="left:1088.8px">23</div>
<div class="xl" style="left:1126.8px">30</div>
<svg class="abs" style="left:0;top:0" width="1231" height="828" viewBox="0 0 1231 828">
<rect x="8" y="8" width="24" height="16" fill="#e0bc88" opacity="0.5"/>
<rect x="12" y="16" width="1.2" height="1.2" fill="#3a2208"/>
<rect x="14" y="16" width="1.2" height="1.2" fill="#3a2208"/>
<rect x="16" y="16" width="1.2" height="1.2" fill="#3a2208"/>
<rect x="18" y="16" width="1.2" height="1.2" fill="#3a2208"/>
<rect x="20" y="16" width="1.2" height="1.2" fill="#3a2208"/>
<rect x="22" y="16" width="1.2" height="1.2" fill="#3a2208"/>
<rect x="24" y="16" width="1.2" height="1.2" fill="#3a2208"/>
<rect x="10" y="18" width="1.2" height="1.2" fill="#3a2208"/>
<rect x="12" y="18" width="1.2" height="1.2" fill="#3a2208"/>
<rect x="14" y="18" width="1.2" height="1.2" fill="#3a2208"/>
<rect x="16" y="18" width="1.2" height="1.2" fill="#3a2208"/>
<rect x="18" y="18" width="1.2" height="1.2" fill="#3a2208"/>
<rect x="20" y="18" width="1.2" height="1.2" fill="#3a2208"/>
<rect x="22" y="18" width="1.2" height="1.2" fill="#3a2208"/>
<rect x="24" y="18" width="1.2" height="1.2" fill="#3a2208"/>
<rect x="10" y="20" width="1.2" height="1.2" fill="#3a2208"/>
<rect x="12" y="20" width="1.2" height="1.2" fill="#3a2208"/>
<rect x="14" y="20" width="1.2" height="1.2" fill="#3a2208"/>
<rect x="16" y="20" width="1.2" height="1.2" fill="#3a2208"/>
<rect x="18" y="20" width="1.2" height="1.2" fill="#3a2208"/>
<rect x="20" y="20" width="1.2" height="1.2" fill="#3a2208"/>
<rect x="22" y="20" width="1.2" height="1.2" fill="#3a2208"/>
<rect x="24" y="20" width="1.2" height="1.2" fill="#3a2208"/>
<rect x="16" y="11" width="1" height="4" fill="#6a4a20" opacity="0.5"/>
<rect x="22" y="10" width="1" height="5" fill="#6a4a20" opacity="0.5"/>
<rect x="24" y="8" width="1" height="8" fill="#5a5a30" opacity="0.6"/>
<rect x="1136" y="13" width="8" height="2" fill="#1c1c30"/>
<rect x="1161" y="7.5" width="10" height="7" fill="none" stroke="#111" stroke-width="1.6"/>
<rect x="1179" y="1" width="45" height="20" fill="#c74f4f"/>
<rect x="1179" y="1" width="45" height="1" fill="#d86060"/>
<path d="M1198 8 L1205.3 15 M1205.3 8 L1198 15" stroke="#fff" stroke-width="1.6" fill="none"/>
<rect x="37.5" y="52" width="1" height="16" fill="#d05050"/>
<rect x="36" y="55.5" width="3.5" height="9" fill="#ff6010"/>
<rect x="41" y="53" width="2.5" height="11" fill="#7a9cc8"/>
<path d="M58.5 54 V68 M63.5 53 V67 M56 57 H58.5 M58.5 63 H61 M61 58 H63.5 M63.5 65 H66" stroke="#111" stroke-width="1.8" fill="none"/>
<polyline points="75,62 79.5,57.5 83.5,61 88.5,56" stroke="#4a78c0" stroke-width="2" fill="none"/>
<path d="M385.5 53.5 V67 M380 61 H395" stroke="#111" stroke-width="1.8" fill="none"/>
<path d="M405.5 53.5 V67.5 M412 53.5 V67.5 M402 57.5 H416 M402 63.5 H416" stroke="#111" stroke-width="1.8" fill="none"/>
<rect x="430" y="55" width="2" height="2" fill="#222"/>
<path d="M429 59.5 H432 V65 M428.5 65 H434" stroke="#222" stroke-width="1.4" fill="none"/>
<path d="M448.5 57 L444.5 60.5 L448.5 64 Z M453.8 57 L457.8 60.5 L453.8 64 Z" fill="#111"/>
<rect x="450" y="60" width="1" height="1" fill="#999"/><rect x="452" y="60" width="1" height="1" fill="#999"/>
<text x="466" y="60" font-family="Liberation Sans" font-size="9" font-weight="bold" fill="#222">vol</text>
<rect x="466" y="61.5" width="12.5" height="4" fill="#3050a8"/>
<rect x="468" y="61.5" width="1" height="1.5" fill="#d0d8f0"/><rect x="471" y="61.5" width="1" height="1.5" fill="#d0d8f0"/><rect x="474" y="61.5" width="1" height="1.5" fill="#d0d8f0"/>
<path d="M494.5 54 V68 M492 56 H494.5" stroke="#111" stroke-width="1.8" fill="none"/>
<path d="M495 63 L506 58" stroke="#222" stroke-width="1.3" fill="none"/>
<path d="M515.5 54 V68 M513 56 H515.5" stroke="#111" stroke-width="1.8" fill="none"/>
<path d="M516 54.5 L527 61" stroke="#333" stroke-width="1.2" fill="none"/>
<path d="M537 54 V67 M545.5 54 V67 M534 57.5 H548 M534 60.5 H548" stroke="#111" stroke-width="1.8" fill="none"/>
<path d="M555.5 54.5 L563 59" stroke="#555" stroke-width="1.2" fill="none"/>
<path d="M565 57 L560.5 60 L562 61 L560 66 L562 66 L564 61.5 L565.5 62 Z" fill="#111"/>
<path d="M582.5 62 L595.5 55 M583.5 66 L596.5 59" stroke="#a0a0a0" stroke-width="1.6" fill="none"/>
<path d="M605 55.5 L615.5 64.5 M615.5 55.5 L605 64.5" stroke="#ff6410" stroke-width="2.8" fill="none"/>
<path d="M624.5 53 L629 57.5 M629 53 L624.5 57.5" stroke="#ff6410" stroke-width="1.4" fill="none"/>
<text x="628" y="66" font-family="Liberation Sans" font-size="10" font-weight="bold" fill="#111">all</text>
<path d="M655 55.5 H661 V60 M655 55.5 V60 M656.5 57.5 H659.5" stroke="#111" stroke-width="1.3" fill="none"/>
<rect x="652.5" y="59.5" width="11" height="4.5" fill="none" stroke="#111" stroke-width="1.6"/>
<rect x="652" y="64.5" width="12" height="1" fill="#7aa0d8"/>
<path d="M675 55 H681 L684 58 V66 H675 Z" fill="none" stroke="#888" stroke-width="1"/>
<circle cx="680" cy="61" r="2.6" fill="none" stroke="#222" stroke-width="1.3"/>
<path d="M682 63 L685.5 66.5" stroke="#222" stroke-width="1.5"/>
<circle cx="707" cy="57.5" r="3.3" fill="none" stroke="#222" stroke-width="1.5"/><path d="M709.5 60 L713 63.5" stroke="#222" stroke-width="2"/>
<path d="M703 60.5 V66 M700.5 63.3 H705.5" stroke="#ff6410" stroke-width="1.3"/>
<circle cx="728.5" cy="57.5" r="3.3" fill="none" stroke="#222" stroke-width="1.5"/><path d="M731 60 L734.5 63.5" stroke="#222" stroke-width="2"/>
<path d="M721.5 63.5 H726" stroke="#3a70c8" stroke-width="1.3"/>
<path d="M741 55 H755 M741 66 H755" stroke="#555" stroke-width="1.6"/>
<path d="M748 57 L745.5 60 H750.5 Z M748 64.5 L745.5 61.5 H750.5 Z" fill="#999"/>
<rect x="1204.5" y="50" width="19" height="19" fill="#bcdcf6" stroke="#5b91d2" stroke-width="1"/>
<path d="M1211 55 V64 M1213.5 55 V64 M1216 55 V64" stroke="#9aa4b0" stroke-width="1"/>
<rect x="12" y="801" width="12" height="11" fill="#3a6aa6"/>
<rect x="26" y="792" width="1" height="25" fill="#9a9a9a"/>
<rect x="30.5" y="796.5" width="150" height="20" fill="#fff" stroke="#a8a8a8" stroke-width="1"/>
<circle cx="40.5" cy="804" r="2.8" fill="none" stroke="#333" stroke-width="1.2"/>
<path d="M38.5 806.5 L35 810" stroke="#333" stroke-width="1.5"/>
<rect x="41" y="810" width="1" height="1" fill="#333"/><rect x="43" y="810" width="1" height="1" fill="#333"/><rect x="45" y="810" width="1" height="1" fill="#333"/>
<rect x="198" y="795" width="1" height="21" fill="#9a9a9a"/>
<rect x="1172.5" y="575.5" width="44" height="13" fill="#f4f4f4" stroke="#e02020" stroke-width="1"/>
</svg>
<div class="abs" style="left:1174px;top:575px;font-size:11px;color:#0000ee;line-height:14px">19.5297</div>
<div class="abs" style="left:51px;top:800px;font-size:11px;color:#6d6d6d;line-height:14px;white-space:nowrap">Search for instrument</div>
<div class="abs" style="left:202.5px;top:800px;font-size:12px;font-weight:bold;color:#111;line-height:16px;white-space:nowrap;letter-spacing:-0.15px">12 Jun 2014 18:36:19 EDT</div>
</body></html>
